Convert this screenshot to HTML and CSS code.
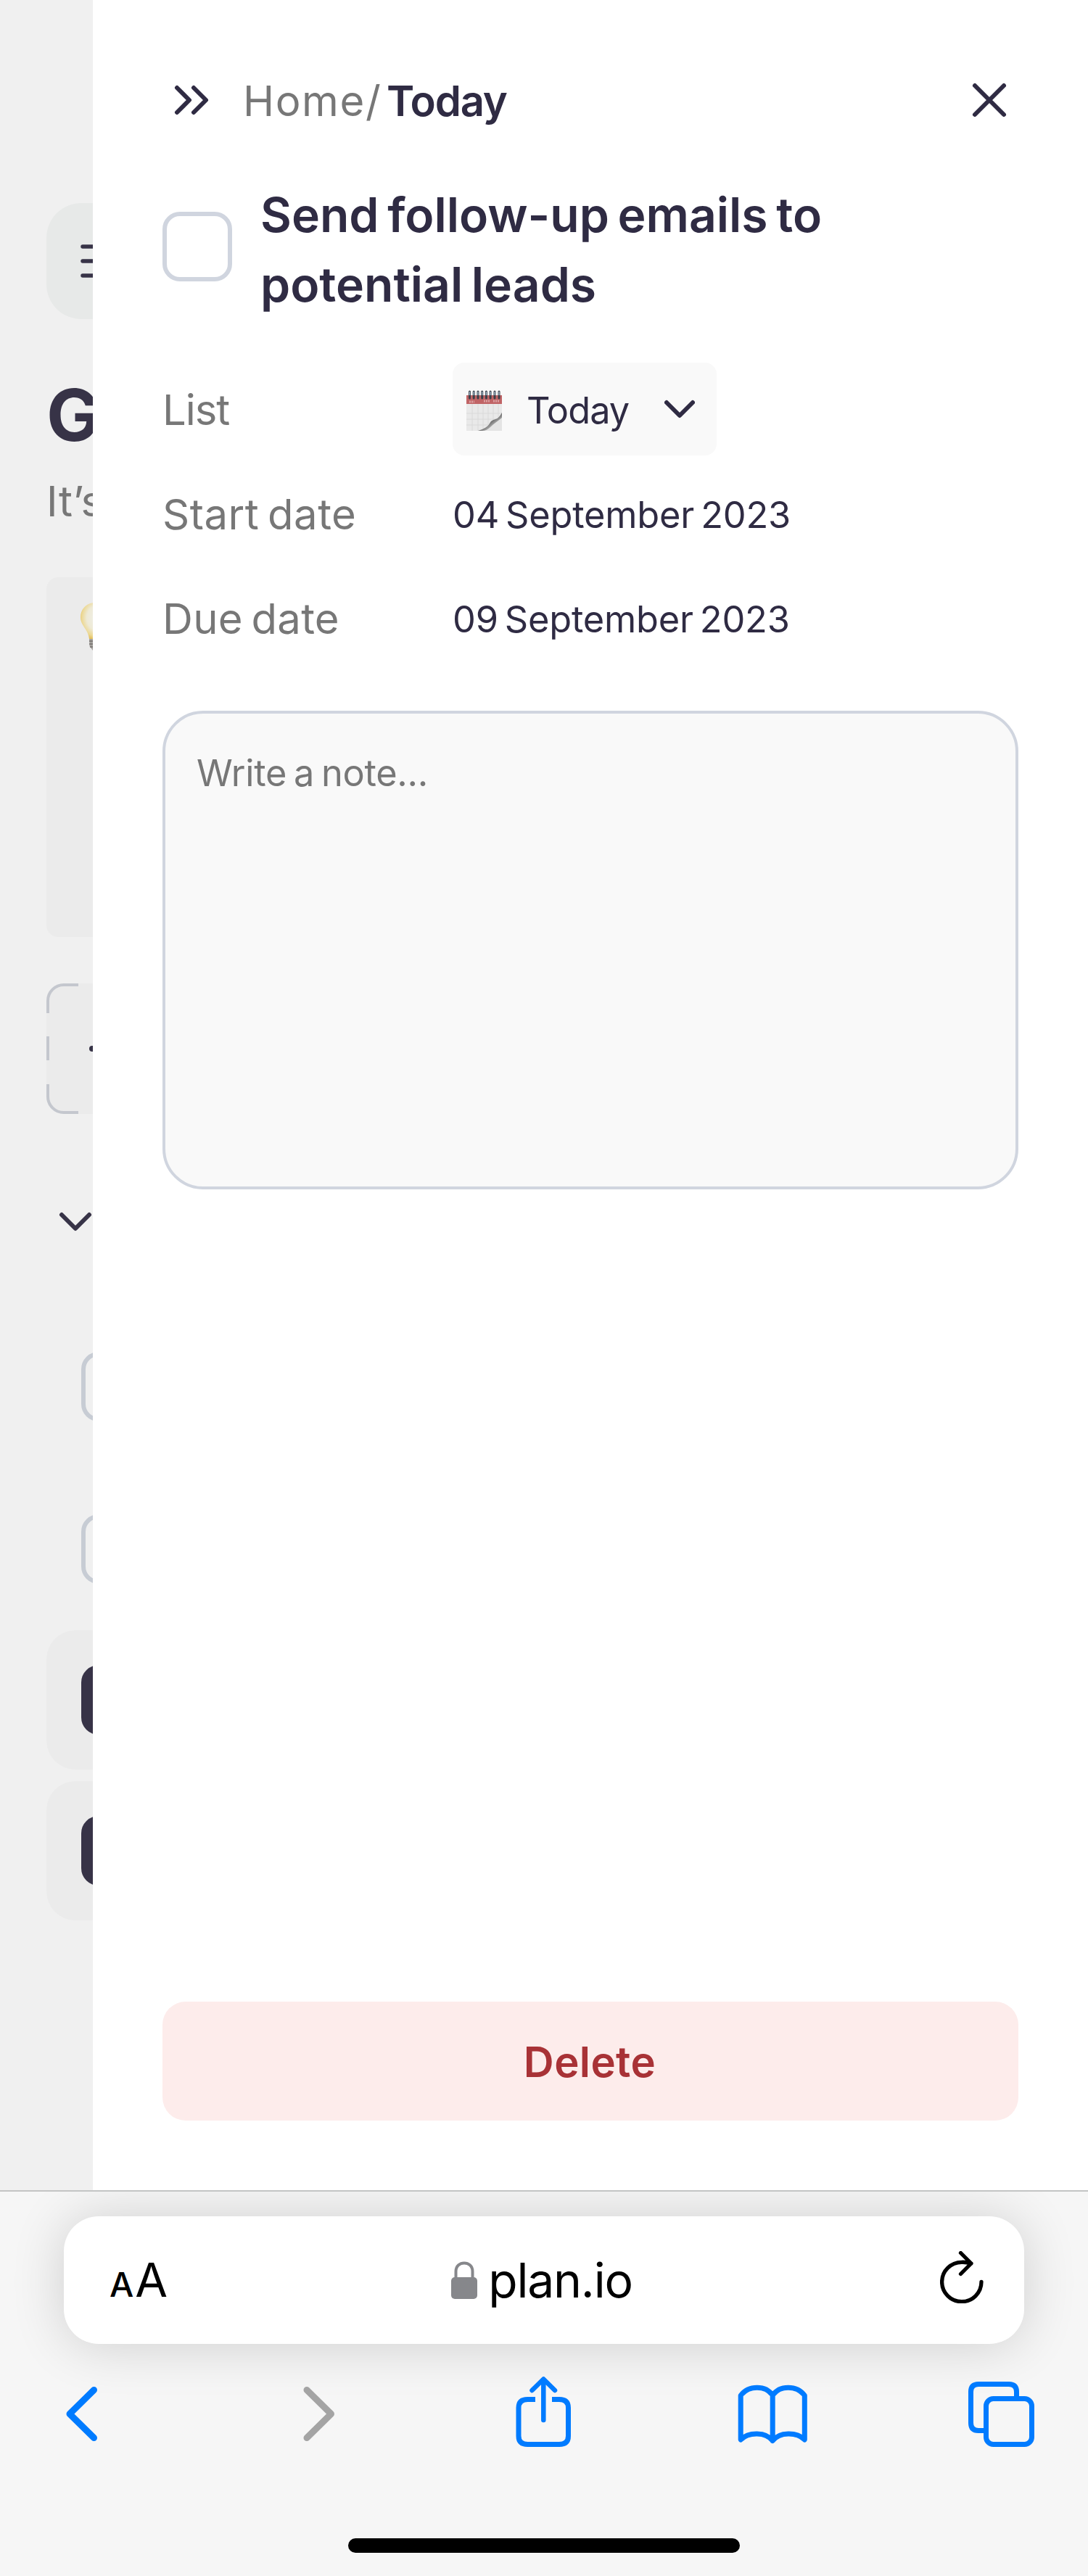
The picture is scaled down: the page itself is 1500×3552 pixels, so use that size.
FILE: index.html
```html
<!DOCTYPE html>
<html lang="en">
<head>
<meta charset="utf-8">
<title>plan.io</title>
<link rel="stylesheet" href="styles.css">
</head>
<body>
<main class="app">
  <aside class="backdrop">
    <div class="menu-button">
      <svg width="48" height="48" viewBox="0 0 48 48"><path d="M6 4H46M6 24H46M6 44H46" class="ink-stroke menu-lines"/></svg>
    </div>
    <h1 class="greeting">G</h1>
    <p class="subtitle">It’s</p>
    <div class="tip-card">
      <svg width="40" height="68" viewBox="0 0 40 68">
        <defs>
          <radialGradient id="glass" cx=".55" cy=".42" r=".6">
            <stop offset="0" stop-color="#efeee6"/>
            <stop offset=".55" stop-color="#eeead6"/>
            <stop offset=".85" stop-color="#ecd894"/>
            <stop offset="1" stop-color="#e3bf5c"/>
          </radialGradient>
        </defs>
        <path d="M20 0C8 0 0 9 0 20C0 32 11 37 12 50H28C29 37 40 32 40 20C40 9 32 0 20 0Z" fill="url(#glass)"/>
        <path d="M12 50H28V60L23 66H17L12.500 60Z" fill="#a5a29e"/>
        <path d="M12 53H28M12 57H28M13 61H27" stroke="#777370" stroke-width="1.500"/>
      </svg>
    </div>
    <div class="add-task">
      <svg width="64" height="180" viewBox="0 0 64 180">
        <path d="M64 0H24A24 24 0 0 0 0 24V156A24 24 0 0 0 24 180H64Z" fill="#ebebeb"/>
        <path d="M44 2H24A22 22 0 0 0 2 24V41M2 73V106M2 139V156A22 22 0 0 0 24 178H44" fill="none" stroke="#c4c7ce" stroke-width="4"/>
        <path d="M63 90H84" class="ink-stroke plus-line"/>
      </svg>
    </div>
    <svg class="section-chevron" width="48" height="28" viewBox="0 0 48 28"><path d="M4 4L23 23L42 4" class="ink-stroke"/></svg>
    <div class="task"><span class="box"></span></div>
    <div class="task"><span class="box"></span></div>
    <div class="task done"><span class="box"></span></div>
    <div class="task done"><span class="box"></span></div>
  </aside>

  <section class="panel">
    <header class="panel-head">
      <button class="icon-button">
        <svg width="80" height="80" viewBox="0 0 80 80"><path d="M20 23L37 40L20 57M43 23L60 40L43 57" class="ink-stroke"/></svg>
      </button>
      <nav class="crumbs"><span class="crumb">Home/</span><span class="crumb current">Today</span></nav>
      <button class="icon-button">
        <svg width="80" height="80" viewBox="0 0 80 80"><path d="M20 20L60 60M60 20L20 60" class="ink-stroke"/></svg>
      </button>
    </header>

    <div class="title-row">
      <span class="box"></span>
      <h2 class="title">Send follow-up emails to<br>potential leads</h2>
    </div>

    <dl class="fields">
      <dt class="list-label">List</dt>
      <dd>
        <span class="select">
          <svg width="50" height="58" viewBox="0 0 50 58">
            <defs>
              <linearGradient id="curl" x1="0" y1="0" x2="1" y2="1">
                <stop offset=".3" stop-color="#ddd"/>
                <stop offset=".5" stop-color="#666"/>
                <stop offset=".75" stop-color="#ccc"/>
              </linearGradient>
            </defs>
            <rect y="8" width="49" height="49" fill="#e9e9e9"/>
            <path d="M8 20V57M16 20V57M23 20V54M30 20V54M37 20V52M44 20V50M0 33H49M0 41H49M0 49H34" stroke="#d9d9d9" stroke-width="1"/>
            <rect y="8" width="49" height="12" fill="#c06466"/>
            <path d="M4 17H11M24 16H33M37 16H46" stroke="#dba0a1" stroke-width="3" stroke-dasharray="2 1"/>
            <path d="M14 57C22 55 27 53 30 49C33 44 36 41 40 41C44 41 46 37 49 31V57Z" fill="#e4e4e4"/>
            <path d="M16 57C25 54 29 52 32 47C34 43 37 42 40 41C44 40 46 37 49 32V39C43 44 38 47 33 52C30 55 26 57 22 57Z" fill="url(#curl)"/>
            <path d="M4.500 3V12M10.200 3V12M16 3V12M21.700 3V12M27.400 3V12M33.100 3V12M39 3V12M45 3V12" stroke="#3b3f48" stroke-width="3" stroke-linecap="round"/>
            <path d="M4.500 3V8M10.200 3V8M16 3V8M21.700 3V8M27.400 3V8M33.100 3V8M39 3V8M45 3V8" stroke="#a9c4d8" stroke-width="1.200"/>
          </svg>
          <span class="select-text">Today</span>
          <svg width="42" height="28" viewBox="0 0 42 28"><path d="M3 5L21 23L39 5" class="ink-stroke"/></svg>
        </span>
      </dd>
      <dt>Start date</dt>
      <dd class="date">04 September 2023</dd>
      <dt class="due-label">Due date</dt>
      <dd class="date">09 September 2023</dd>
    </dl>

    <div class="note">Write a note...</div>
    <button class="delete">Delete</button>
  </section>
</main>

<footer class="browser">
  <div class="address">
    <span class="text-size"><span class="small-a">A</span><span class="big-a">A</span></span>
    <span class="host">
      <svg width="36" height="52" viewBox="0 0 36 52">
        <rect y="22" width="36" height="30" rx="5" fill="#86878b"/>
        <path d="M6.500 24V14C6.500 -1.500 29.500 -1.500 29.500 14V24" fill="none" stroke="#86878b" stroke-width="4"/>
      </svg>
      <span>plan.io</span>
    </span>
    <svg width="60" height="72" viewBox="0 0 60 72" class="reload"><path d="M57 42.500A27.200 27.200 0 1 1 30 15.300Q36 15 43 17M28.500 2.500L43 17L28.500 31.500"/></svg>
  </div>
  <nav class="toolbar">
    <svg width="96" height="100" viewBox="0 0 96 100"><path d="M48.500 17.500L15 50.500L48.500 83.500" stroke-width="9"/></svg>
    <svg class="disabled" width="96" height="100" viewBox="0 0 96 100"><path d="M33 17.500L66.500 50.500L33 83.500" stroke-width="9"/></svg>
    <svg width="96" height="100" viewBox="0 0 96 100">
      <path d="M40 30.500H29.500Q17 30.500 17 42V81Q17 92.500 29.500 92.500H73Q85.500 92.500 85.500 81V42Q85.500 30.500 73 30.500H63" stroke-linecap="butt"/>
      <path d="M51.300 59V3M35.500 18L51.300 2.500L67 18" stroke-width="6.500"/>
    </svg>
    <svg width="112" height="100" viewBox="0 0 112 100">
      <path d="M58.200 87.500C49 75 25 75 14.200 86V25C25 10.500 49 10.500 58.200 25V87.500C67.500 75 91.500 75 102.300 86V25C91.500 10.500 67.500 10.500 58.200 25"/>
    </svg>
    <svg width="96" height="100" viewBox="0 0 96 100">
      <path d="M24.500 73.500H18Q7.500 73.500 7.500 63V20Q7.500 9.500 18 9.500H60Q70.500 9.500 70.500 20V28"/>
      <rect x="28.500" y="29.500" width="63" height="63" rx="10"/>
    </svg>
  </nav>
  <div class="home-indicator"></div>
</footer>
</body>
</html>
```
FILE: styles.css
```css
* { box-sizing: border-box; }

body {
  margin: 0;
  width: 1500px;
  height: 3552px;
  overflow: hidden;
  font-family: Inter, "Liberation Sans", sans-serif;
  background: #f6f6f6;
  color: #2f2b43;
}

svg { display: block; flex: none; }
button { border: 0; padding: 0; font: inherit; color: inherit; background: none; }
h1, h2, p, dl, dd { margin: 0; }

.ink-stroke {
  fill: none;
  stroke: #2f2b43;
  stroke-width: 6;
  stroke-linecap: round;
  stroke-linejoin: round;
}

.app { display: flex; height: 3020px; }

/* Dimmed page behind the task panel */
.backdrop {
  width: 128px;
  flex: none;
  overflow: hidden;
  padding: 280px 0 0 64px;
  background: #f0f0f0;
}
.backdrop .ink-stroke { stroke: #373347; }
.menu-button {
  width: 160px;
  height: 160px;
  padding: 56px 44px;
  border-radius: 48px;
  background: #e7e9e8;
}
.menu-button svg { overflow: visible; }
.backdrop .menu-lines { stroke-width: 5.500; }
.greeting {
  margin: 68px 0 0;
  height: 128px;
  font-size: 99px;
  line-height: 128px;
  font-weight: 660;
  color: #373347;
}
.subtitle {
  margin-top: 15px;
  font-size: 58px;
  line-height: 80px;
  letter-spacing: .5px;
  color: #777;
}
.tip-card {
  width: 400px;
  height: 496px;
  margin-top: 65px;
  padding: 35px 0 0 47px;
  border-radius: 16px;
  background: #ebebeb;
}
.add-task { margin-top: 64px; }
.plus-line { stroke-width: 8; }
.section-chevron { margin: 135px 0 0 17px; }
.task {
  width: 400px;
  height: 192px;
  padding: 48px;
  border-radius: 40px;
}
.section-chevron + .task { margin-top: 117px; }
.task + .task { margin-top: 32px; }
.task + .task.done { margin-top: 16px; background: #ebebeb; }
.backdrop .box { border-color: #c7ccd4; }
.backdrop .done .box { border-color: #373347; background: #373347; }
.box {
  display: block;
  flex: none;
  width: 96px;
  height: 96px;
  border: 6px solid #d0d5df;
  border-radius: 24px;
}

/* Task detail panel */
.panel {
  flex: 1;
  display: flex;
  flex-direction: column;
  padding: 98px 96px 96px;
  background: #fff;
}
.panel-head { display: flex; align-items: center; height: 80px; }
.crumbs {
  flex: 1;
  display: flex;
  margin-left: 31px;
  padding-top: 2px;
  font-size: 58px;
  line-height: 80px;
}
.crumb { width: 198px; letter-spacing: 1.600px; color: #777; }
.crumb.current { font-weight: 560; letter-spacing: -1.200px; color: #2f2b43; }
.title-row { display: flex; margin-top: 70px; height: 192px; }
.title-row .box { margin-top: 44px; }
.title {
  margin-left: 39px;
  font-size: 66px;
  line-height: 96px;
  font-weight: 560;
  letter-spacing: 0;
  word-spacing: -5px;
  white-space: nowrap;
}
.fields {
  display: grid;
  grid-template-columns: 400px 1fr;
  grid-auto-rows: 128px;
  row-gap: 16px;
  margin-top: 60px;
  line-height: 128px;
}
.fields dt { padding-top: 1px; font-size: 58px; letter-spacing: .500px; word-spacing: -5px; color: #777; }
.fields .list-label { letter-spacing: -1.100px; }
.fields .due-label { letter-spacing: .300px; }
.fields dd { font-size: 50.500px; }
.date { padding: 2px 0 0; letter-spacing: -.200px; word-spacing: -5px; white-space: nowrap; }
.select {
  display: flex;
  align-items: center;
  width: 364px;
  height: 128px;
  padding: 0 30px 0 19px;
  border-radius: 16px;
  background: #f9f9f9;
}
.select > svg:first-child { margin-top: 3px; }
.select-text { flex: 1; margin-left: 33px; padding-top: 3px; letter-spacing: -.900px; }
.note {
  height: 660px;
  margin-top: 64px;
  padding: 44px 43px;
  border: 4px solid #d0d5df;
  border-radius: 56px;
  background: #f9f9f9;
  color: #777;
  font-size: 50.500px;
  line-height: 76px;
  letter-spacing: -.300px;
  word-spacing: -4px;
}
.delete {
  height: 164px;
  margin-top: auto;
  padding: 2px 2px 0 0;
  border-radius: 32px;
  background: #fdeceb;
  color: #a83236;
  font-size: 58px;
  font-weight: 560;
  letter-spacing: .400px;
}

/* Browser chrome */
.browser {
  display: flex;
  flex-direction: column;
  align-items: center;
  height: 532px;
  padding-top: 34px;
  border-top: 2px solid #c3c4c4;
  background: #f6f6f6;
  overflow: hidden;
}
.address {
  display: grid;
  grid-template-columns: 1fr auto 1fr;
  align-items: center;
  flex: none;
  width: 1324px;
  height: 176px;
  padding: 0 69px 0 63px;
  border-radius: 48px;
  background: #fff;
  box-shadow: 0 2px 72px rgba(0, 0, 0, .16);
  color: #000;
}
.text-size { display: flex; align-items: baseline; padding-top: 5px; line-height: 80px; }
.small-a { font-size: 47px; font-weight: 500; margin-right: 2px; }
.big-a { font-size: 65px; }
.host {
  display: flex;
  align-items: center;
  gap: 15px;
  font-size: 66px;
  line-height: 80px;
  letter-spacing: -1.200px;
}
.reload {
  justify-self: end;
  margin: 0 -13px 8px 0;
  fill: none;
  stroke: #000;
  stroke-width: 5.300;
  stroke-linecap: round;
  stroke-linejoin: round;
}
.toolbar {
  display: flex;
  justify-content: space-between;
  width: 1346px;
  margin: 46px 0 0 8px;
  fill: none;
  stroke: #007bff;
  stroke-width: 7;
  stroke-linecap: round;
  stroke-linejoin: round;
}
.toolbar svg { overflow: visible; }
.disabled { stroke: #a4a4a4; }
.home-indicator {
  width: 540px;
  height: 20px;
  margin-top: 122px;
  border-radius: 10px;
  background: #000;
}
```
